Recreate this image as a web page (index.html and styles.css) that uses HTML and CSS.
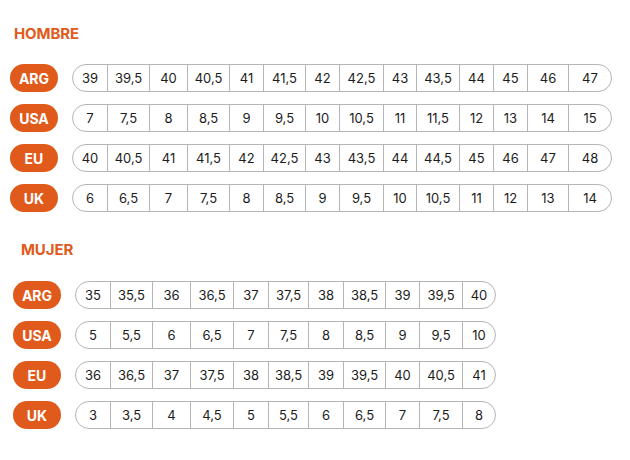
FILE: index.html
```html
<!DOCTYPE html>
<html lang="es">
<head>
<meta charset="utf-8">
<title>Guía de talles</title>
<link rel="stylesheet" href="styles.css">
</head>
<body>
<main class="page">
  <section class="section hombre">
    <h2 class="title">HOMBRE</h2>
    <div class="rows">
      <div class="row"><span class="pill">ARG</span><div class="sizes"><span>39</span><span>39,5</span><span>40</span><span>40,5</span><span>41</span><span>41,5</span><span>42</span><span>42,5</span><span>43</span><span>43,5</span><span>44</span><span>45</span><span>46</span><span>47</span></div></div>
      <div class="row"><span class="pill">USA</span><div class="sizes"><span>7</span><span>7,5</span><span>8</span><span>8,5</span><span>9</span><span>9,5</span><span>10</span><span>10,5</span><span>11</span><span>11,5</span><span>12</span><span>13</span><span>14</span><span>15</span></div></div>
      <div class="row"><span class="pill">EU</span><div class="sizes"><span>40</span><span>40,5</span><span>41</span><span>41,5</span><span>42</span><span>42,5</span><span>43</span><span>43,5</span><span>44</span><span>44,5</span><span>45</span><span>46</span><span>47</span><span>48</span></div></div>
      <div class="row"><span class="pill">UK</span><div class="sizes"><span>6</span><span>6,5</span><span>7</span><span>7,5</span><span>8</span><span>8,5</span><span>9</span><span>9,5</span><span>10</span><span>10,5</span><span>11</span><span>12</span><span>13</span><span>14</span></div></div>
    </div>
  </section>
  <section class="section mujer">
    <h2 class="title">MUJER</h2>
    <div class="rows">
      <div class="row"><span class="pill">ARG</span><div class="sizes"><span>35</span><span>35,5</span><span>36</span><span>36,5</span><span>37</span><span>37,5</span><span>38</span><span>38,5</span><span>39</span><span>39,5</span><span>40</span></div></div>
      <div class="row"><span class="pill">USA</span><div class="sizes"><span>5</span><span>5,5</span><span>6</span><span>6,5</span><span>7</span><span>7,5</span><span>8</span><span>8,5</span><span>9</span><span>9,5</span><span>10</span></div></div>
      <div class="row"><span class="pill">EU</span><div class="sizes"><span>36</span><span>36,5</span><span>37</span><span>37,5</span><span>38</span><span>38,5</span><span>39</span><span>39,5</span><span>40</span><span>40,5</span><span>41</span></div></div>
      <div class="row"><span class="pill">UK</span><div class="sizes"><span>3</span><span>3,5</span><span>4</span><span>4,5</span><span>5</span><span>5,5</span><span>6</span><span>6,5</span><span>7</span><span>7,5</span><span>8</span></div></div>
    </div>
  </section>
</main>
</body>
</html>
```
FILE: styles.css
```css
* { box-sizing: border-box; }

body {
  margin: 0;
  background: #ffffff;
  font-family: Inter, "Noto Sans", "Liberation Sans", sans-serif;
  color: #1c1c1c;
}

.page {
  padding-top: 25px;
}

.title {
  margin: 0 0 21px;
  font-size: 15px;
  line-height: 18px;
  font-weight: 700;
  color: #e05a1b;
  letter-spacing: -0.1px;
}

.rows {
  display: flex;
  flex-direction: column;
  gap: 12px;
}

.row {
  display: flex;
  align-items: center;
  gap: 14px;
}

.pill {
  flex: none;
  width: 48px;
  height: 28px;
  border-radius: 14px;
  background: #e05a1b;
  color: #ffffff;
  font-size: 14px;
  font-weight: 700;
  display: flex;
  align-items: center;
  justify-content: center;
}

.sizes {
  display: grid;
  height: 28px;
  border: 1px solid #b5b5b5;
  border-radius: 14px;
  overflow: hidden;
}

.sizes span {
  display: flex;
  align-items: center;
  justify-content: center;
  font-size: 13px;
  border-left: 1px solid #b5b5b5;
}

.sizes span:first-child {
  border-left: none;
}

.hombre {
  padding-left: 10px;
}

.hombre .title {
  margin-left: 4px;
}

.hombre .sizes {
  grid-template-columns: 34px 42px 38px 42px 34px 42px 34px 44px 33px 43px 34px 34px 41px 43px;
}

.mujer {
  margin-top: 29px;
  padding-left: 13px;
}

.mujer .title {
  margin-left: 8px;
  margin-bottom: 22px;
}

.mujer .sizes {
  grid-template-columns: 34px 42px 38px 43px 35px 40px 35px 42px 34px 43px 33px;
}
```
